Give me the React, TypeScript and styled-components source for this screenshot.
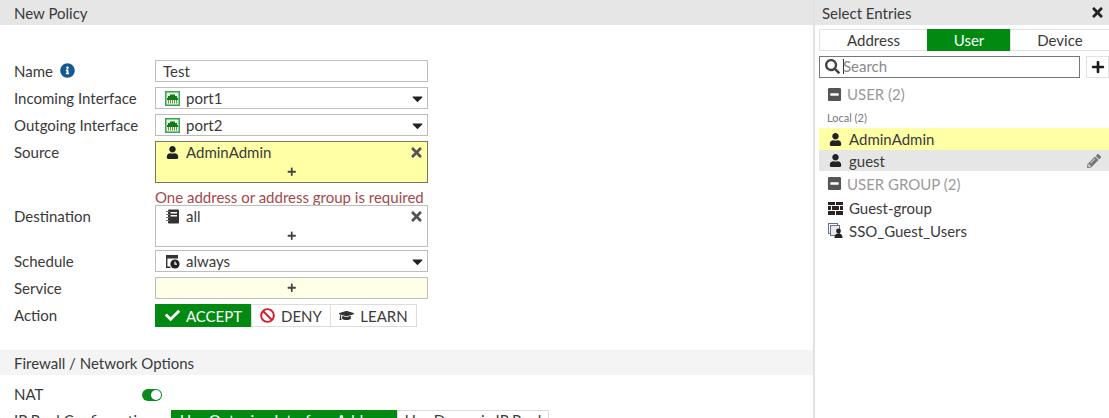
import React from "react";
import styled, { createGlobalStyle } from "styled-components";
import {
  FaBan, FaCaretDown, FaCheck, FaGraduationCap, FaInfoCircle, FaMinusSquare,
  FaPencilAlt, FaPlus, FaSearch, FaTimes, FaUser,
} from "react-icons/fa";

const Global = createGlobalStyle`
  html, body { margin: 0; padding: 0; background: #fff; }
  body { font-family: Lato, "Open Sans", sans-serif; font-size: 15px; color: #3a3a3a; }
  #root { height: 418px; overflow: hidden; }
`;

const Page = styled.div`
  display: flex;
  height: 418px;
  overflow: hidden;
`;
const Main = styled.main`
  width: 813px;
  flex: none;
  overflow: hidden;
`;
const Side = styled.aside`
  flex: 1;
  min-width: 0;
  border-left: 2px solid #e2e2e2;
`;
const Heading = styled.header<{ $light?: boolean }>`
  height: 25px;
  display: flex;
  align-items: center;
  justify-content: space-between;
  background: ${(p) => (p.$light ? "#f4f4f4" : "#e6e6e6")};
  font-size: 15px;
  padding: 0 14px;
`;
const SideHeading = styled(Heading)`
  padding: 0 4px 0 7px;
  svg { color: #222; font-size: 15px; }
`;
const Form = styled.div`
  padding-top: 35px;
  display: flex;
  flex-direction: column;
  gap: 5px;
`;
const Row = styled.div<{ $mt?: number }>`
  display: grid;
  grid-template-columns: 141px 273px;
  padding-left: 14px;
  align-items: start;
  margin-top: ${(p) => p.$mt ?? 0}px;
`;
const Label = styled.div`
  height: 21px;
  line-height: 20px;
  display: flex;
  align-items: center;
  gap: 7px;
  white-space: nowrap;
  svg { color: #14598f; font-size: 15px; }
`;
const Control = styled.div<{ $tall?: boolean; $bg?: string; $dark?: boolean }>`
  box-sizing: border-box;
  height: ${(p) => (p.$tall ? "42px" : "22px")};
  border: 1px solid ${(p) => (p.$dark ? "#77775a" : "#bdbdbd")};
  background: ${(p) => p.$bg ?? "#fff"};
  position: relative;
  display: flex;
  flex-direction: column;
`;
const Line = styled.div`
  height: 20px;
  display: flex;
  align-items: center;
  padding: 0 4px 0 9px;
  gap: 7px;
  line-height: 20px;
`;
const TextLine = styled(Line)`
  padding-left: 7px;
`;
const Glyph = styled.span`
  width: 14px;
  height: 14px;
  flex: none;
  display: inline-flex;
  align-items: center;
  justify-content: center;
  color: #222;
  font-size: 13px;
  svg { display: block; flex: none; }
`;
const Grow = styled.span`
  flex: 1;
`;
const Remove = styled.span`
  color: #555;
  font-size: 15px;
  display: inline-flex;
  margin-right: -1px;
`;
const Caret = styled.span`
  color: #222;
  font-size: 17px;
  display: inline-flex;
  margin-right: -3px;
`;
const Adder = styled.div`
  flex: 1;
  display: flex;
  align-items: center;
  justify-content: center;
  color: #444;
  font-size: 9.5px;
`;
const ErrorText = styled.div`
  color: #a5484c;
  font-size: 15px;
  line-height: 17px;
  margin: 6px 0 -6px;
  white-space: nowrap;
`;
const Buttons = styled.div`
  display: flex;
  height: 23px;
`;
const Option = styled.div<{ $on?: boolean; $w: number }>`
  box-sizing: border-box;
  width: ${(p) => p.$w}px;
  flex: none;
  display: flex;
  align-items: center;
  justify-content: center;
  gap: 6px;
  background: ${(p) => (p.$on ? "#008a12" : "#fff")};
  color: ${(p) => (p.$on ? "#fff" : "#3a3a3a")};
  border: 1px solid ${(p) => (p.$on ? "#008a12" : "#dcdcdc")};
  margin-right: -1px;
  white-space: nowrap;
  svg { font-size: 15px; }
`;
const PoolOption = styled(Option)`
  align-items: flex-start;
  line-height: 18px;
`;
const Section = styled.div`
  margin-top: 23px;
`;
const NatRow = styled.div`
  display: flex;
  align-items: center;
  height: 22px;
  padding-left: 14px;
  margin-top: 8px;
`;
const NatLabel = styled.div`
  width: 128px;
`;
const Toggle = styled.div`
  width: 20px;
  height: 12px;
  border-radius: 6px;
  background: #0a8a1e;
  position: relative;
  top: 1px;
  &::after {
    content: "";
    position: absolute;
    right: 1px;
    top: 1px;
    width: 10px;
    height: 10px;
    border-radius: 50%;
    background: #fff;
  }
`;
const PoolRow = styled.div`
  display: flex;
  padding-left: 14px;
  margin-top: 5px;
  height: 23px;
`;
const PoolLabel = styled.div`
  width: 157px;
  white-space: nowrap;
  line-height: 20px;
`;
const Tabs = styled.div`
  display: flex;
  margin: 4px 0 0 4px;
  height: 22px;
`;
const Tab = styled.div<{ $on?: boolean; $w: number }>`
  box-sizing: border-box;
  width: ${(p) => p.$w}px;
  flex: none;
  display: flex;
  align-items: center;
  justify-content: center;
  background: ${(p) => (p.$on ? "#008a12" : "#fff")};
  color: ${(p) => (p.$on ? "#fff" : "#3a3a3a")};
  border: 1px solid ${(p) => (p.$on ? "#008a12" : "#e2e2e2")};
  margin-right: -1px;
`;
const SearchRow = styled.div`
  display: flex;
  margin: 5px 0 0 4px;
  height: 22px;
  gap: 6px;
`;
const SearchBox = styled.div`
  box-sizing: border-box;
  width: 261px;
  flex: none;
  border: 1px solid #777;
  display: flex;
  align-items: center;
  padding: 0 0 2px 5px;
  color: #8a8a8a;
  svg { color: #444; font-size: 15px; margin-right: 3px; }
`;
const Cursor = styled.span`
  width: 1px;
  height: 15px;
  background: #333;
  margin-right: -1px;
`;
const AddButton = styled.div`
  box-sizing: border-box;
  flex: 1;
  border: 1px solid #e2e2e2;
  display: flex;
  align-items: center;
  justify-content: center;
  color: #1c1c1c;
  font-size: 14px;
`;
const GroupTitle = styled.div<{ $h: number }>`
  height: ${(p) => p.$h}px;
  display: flex;
  align-items: center;
  gap: 5px;
  padding-left: 12px;
  color: #9a9a9a;
  font-size: 15px;
  svg { color: #555; font-size: 15px; }
`;
const LocalTitle = styled.div`
  height: 18px;
  line-height: 16px;
  padding-left: 12px;
  color: #777;
  font-size: 11px;
`;
const Entry = styled.div<{ $bg?: string; $h?: number }>`
  height: ${(p) => p.$h ?? 22}px;
  margin-left: 4px;
  display: flex;
  align-items: center;
  gap: 7px;
  padding: 0 8px 0 9px;
  background: ${(p) => p.$bg ?? "transparent"};
`;
const Edit = styled.span`
  margin-left: auto;
  color: #777;
  font-size: 14px;
  display: inline-flex;
`;

const PortIcon = () => (
  <svg width="15" height="15" viewBox="0 0 15 15">
    <rect x=".75" y=".75" width="13.5" height="13.5" fill="#eaf3e4" stroke="#2fa84f" strokeWidth="1.5" />
    <path d="M3 7V5h2V3.5h5V5h2v2h1v2H2V7z" fill="#0e7a1a" />
    <path d="M3.5 9v3.5M5.5 9v3.5M7.5 9v3.5M9.5 9v3.5M11.5 9v3.5" stroke="#7d8a4a" />
  </svg>
);
const BookIcon = () => (
  <svg width="15" height="15" viewBox="0 0 15 15">
    <rect x="3" y=".5" width="11" height="14" rx="1" fill="#333" />
    <path d="M5.5 3h6.5v1.5H5.5zM5.5 6h6.5v1.5H5.5z" fill="#fff" />
    <path d="M1 2.5h3.5M1 5.5h3.5M1 8.5h3.5M1 11.5h3.5" stroke="#777" />
  </svg>
);
const ScheduleIcon = () => (
  <svg width="15" height="15" viewBox="0 0 15 15">
    <path d="M1 1h12v3.5H2.4V12.5h3v1.4H1z" fill="#333" />
    <circle cx="10" cy="10" r="4.6" fill="#222" />
    <path d="M10 7.5v2.7h2" stroke="#fff" strokeWidth="1.2" fill="none" />
  </svg>
);
const BrickIcon = () => (
  <svg width="15" height="13" viewBox="0 0 15 13">
    <path d="M0 0h7v3H0zM8 0h7v3H8zM0 4h3v4H0zM4 4h7v4H4zM12 4h3v4h-3zM0 9h7v4H0zM8 9h7v4H8z" fill="#2b2222" />
  </svg>
);
const SsoIcon = () => (
  <svg width="15" height="15" viewBox="0 0 15 15">
    <rect x=".5" y=".5" width="9" height="10" fill="#fff" stroke="#68708c" />
    <rect x="2.5" y="2.5" width="9" height="10" fill="#e9e9f2" stroke="#68708c" />
    <circle cx="10.5" cy="8" r="2.4" fill="#222" />
    <path d="M6.5 15c0-3.5 1.8-4.5 4-4.5s4 1 4 4.5z" fill="#222" />
  </svg>
);

export default function App() {
  return (
    <Page>
      <Global />
      <Main>
        <Heading>New Policy</Heading>
        <Form>
          <Row>
            <Label>Name <FaInfoCircle /></Label>
            <Control><TextLine>Test</TextLine></Control>
          </Row>
          <Row>
            <Label>Incoming Interface</Label>
            <Control>
              <Line><Glyph><PortIcon /></Glyph>port1<Grow /><Caret><FaCaretDown /></Caret></Line>
            </Control>
          </Row>
          <Row>
            <Label>Outgoing Interface</Label>
            <Control>
              <Line><Glyph><PortIcon /></Glyph>port2<Grow /><Caret><FaCaretDown /></Caret></Line>
            </Control>
          </Row>
          <Row>
            <Label>Source</Label>
            <div>
              <Control $tall $bg="#ffffa6" $dark>
                <Line><Glyph><FaUser /></Glyph>AdminAdmin<Grow /><Remove><FaTimes /></Remove></Line>
                <Adder><FaPlus /></Adder>
              </Control>
              <ErrorText>One address or address group is required</ErrorText>
            </div>
          </Row>
          <Row>
            <Label>Destination</Label>
            <Control $tall>
              <Line><Glyph><BookIcon /></Glyph>all<Grow /><Remove><FaTimes /></Remove></Line>
              <Adder><FaPlus /></Adder>
            </Control>
          </Row>
          <Row $mt={-2}>
            <Label>Schedule</Label>
            <Control>
              <Line><Glyph><ScheduleIcon /></Glyph>always<Grow /><Caret><FaCaretDown /></Caret></Line>
            </Control>
          </Row>
          <Row>
            <Label>Service</Label>
            <Control $bg="#ffffe8"><Adder><FaPlus /></Adder></Control>
          </Row>
          <Row>
            <Label>Action</Label>
            <Buttons>
              <Option $on $w={97}><FaCheck />ACCEPT</Option>
              <Option $w={80}><FaBan color="#d8192a" />DENY</Option>
              <Option $w={87}><FaGraduationCap color="#333" />LEARN</Option>
            </Buttons>
          </Row>
        </Form>
        <Section>
          <Heading $light>Firewall / Network Options</Heading>
          <NatRow>
            <NatLabel>NAT</NatLabel>
            <Toggle />
          </NatRow>
          <PoolRow>
            <PoolLabel>IP Pool Configuration</PoolLabel>
            <Buttons>
              <PoolOption $on $w={227}>Use Outgoing Interface Address</PoolOption>
              <PoolOption $w={152}>Use Dynamic IP Pool</PoolOption>
            </Buttons>
          </PoolRow>
        </Section>
      </Main>
      <Side>
        <SideHeading>Select Entries <FaTimes /></SideHeading>
        <Tabs>
          <Tab $w={109}>Address</Tab>
          <Tab $on $w={84}>User</Tab>
          <Tab $w={100}>Device</Tab>
        </Tabs>
        <SearchRow>
          <SearchBox><FaSearch /><Cursor />Search</SearchBox>
          <AddButton><FaPlus /></AddButton>
        </SearchRow>
        <GroupTitle $h={32}><FaMinusSquare />USER (2)</GroupTitle>
        <LocalTitle>Local (2)</LocalTitle>
        <Entry $bg="#ffffa6" $h={22}><Glyph><FaUser /></Glyph>AdminAdmin</Entry>
        <Entry $bg="#e6e6e6" $h={21}><Glyph><FaUser /></Glyph>guest<Edit><FaPencilAlt /></Edit></Entry>
        <GroupTitle $h={25}><FaMinusSquare />USER GROUP (2)</GroupTitle>
        <Entry $h={24}><Glyph><BrickIcon /></Glyph>Guest-group</Entry>
        <Entry $h={21}><Glyph><SsoIcon /></Glyph>SSO_Guest_Users</Entry>
      </Side>
    </Page>
  );
}
